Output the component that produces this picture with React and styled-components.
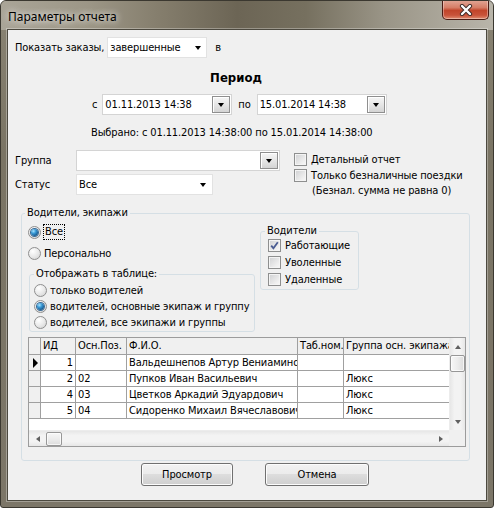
import React from 'react';
import styled, { createGlobalStyle } from 'styled-components';

const UI_FONT = '"DejaVu Sans Condensed", "Liberation Sans", sans-serif';

const GlobalStyle = createGlobalStyle`
  html, body {
    margin: 0;
    padding: 0;
    background: #ffffff;
  }
  body {
    font-family: ${UI_FONT};
    font-size: 11px;
    letter-spacing: -0.12px;
    color: #000;
  }
  * {
    box-sizing: border-box;
  }
`;

const Window = styled.div`
  width: 494px;
  height: 508px;
  display: flex;
  flex-direction: column;
  background: linear-gradient(180deg, #8a8474 0%, #7a7464 30%, #7c7668 100%);
  border: 1px solid #3b3830;
  border-radius: 6px 6px 3px 3px;
  overflow: hidden;
`;

const TitleBar = styled.div`
  height: 29px;
  display: flex;
  justify-content: space-between;
  align-items: flex-start;
  padding-right: 4px;
  background: linear-gradient(90deg, #aaa598 0%, #9c9686 18%, #857e6d 32%, #6c6555 48%, #76705f 62%, #9a9587 78%, #b9b5aa 100%);
`;

const Title = styled.div`
  padding: 8px 0 0 7px;
  font-family: "Noto Sans", "Liberation Sans", sans-serif;
  font-size: 12px;
  letter-spacing: 0;
  line-height: 16px;
  color: #000;
  text-shadow: 0 0 6px rgba(255, 255, 255, 0.9), 0 0 10px rgba(255, 255, 255, 0.6);
`;

const CloseButton = styled.div`
  width: 47px;
  height: 20px;
  margin-top: -1px;
  display: flex;
  align-items: center;
  justify-content: center;
  border: 1px solid #4b1c14;
  border-top: none;
  border-radius: 0 0 5px 5px;
  background: linear-gradient(180deg, #e2a898 0%, #d57d66 40%, #c1452b 55%, #c9533a 80%, #e08e72 100%);
  box-shadow: inset 0 0 0 1px rgba(255, 255, 255, 0.35);
`;

const Client = styled.div`
  flex: 1;
  margin: 0 7px 7px 7px;
  background: #f0f0f0;
  box-shadow: 0 0 0 1px #4c493f, 0 0 0 2px rgba(255, 255, 255, 0.3);
  display: flex;
  flex-direction: column;
`;

const Row = styled.div`
  display: flex;
  align-items: center;
  height: ${p => p.$height || 21}px;
  margin-top: ${p => p.$top || 0}px;
  padding-left: ${p => p.$left || 0}px;
`;

const Text = styled.span`
  margin-left: ${p => p.$gap || 0}px;
  white-space: nowrap;
`;

const PeriodTitle = styled.div`
  margin-top: 12px;
  height: 15px;
  line-height: 15px;
  text-align: center;
  padding-right: 22px;
  font-size: 13px;
  font-weight: bold;
  letter-spacing: 0;
`;

const Combo = styled.div`
  width: ${p => p.$width}px;
  height: 21px;
  margin-left: ${p => p.$gap || 0}px;
  display: flex;
  align-items: center;
  background: #ffffff;
  border: 1px solid ${p => (p.$boxed ? '#d4d4d4' : '#e2e2e2')};
  padding-left: 2px;
  flex-shrink: 0;
`;

const ComboText = styled.span`
  flex: 1;
  white-space: nowrap;
  overflow: hidden;
`;

const Arrow = styled.span`
  width: 0;
  height: 0;
  border-left: 3.5px solid transparent;
  border-right: 3.5px solid transparent;
  border-top: 4px solid #000;
  margin-right: ${p => p.$right || 0}px;
`;

const DropButton = styled.span`
  width: 18px;
  height: 17px;
  margin-right: 1px;
  display: flex;
  align-items: center;
  justify-content: center;
  border: 1px solid #8f8f8f;
  background: linear-gradient(180deg, #f6f6f6 0%, #e6e6e6 50%, #d4d4d4 100%);
  box-shadow: inset 1px 1px 0 #ffffff;
`;

const FormArea = styled.div`
  display: flex;
  margin-top: 11px;
  padding-left: 7px;
`;

const FieldColumn = styled.div`
  width: 279px;
  display: flex;
  flex-direction: column;
  gap: 3px;
`;

const FieldRow = styled.div`
  display: flex;
  align-items: center;
  height: 21px;
`;

const FieldLabel = styled.span`
  width: 61px;
`;

const OptionColumn = styled.div`
  display: flex;
  flex-direction: column;
  gap: ${p => p.$gap || 3}px;
  margin-top: ${p => p.$top || 0}px;
`;

const CheckRow = styled.label`
  display: flex;
  align-items: center;
  height: 13px;
  white-space: nowrap;
`;

const Box = styled.span`
  width: 13px;
  height: 13px;
  margin-right: 4px;
  flex-shrink: 0;
  display: flex;
  align-items: center;
  justify-content: center;
  border: 1px solid #8e8f8f;
  background: linear-gradient(135deg, #cfd0d2 0%, #eeeeee 70%, #f8f8f8 100%);
  box-shadow: inset 0 0 0 1px #f4f4f4;
`;

const Note = styled.div`
  padding-left: 18px;
  margin-top: -1px;
  line-height: 13px;
  white-space: nowrap;
`;

const GroupBox = styled.fieldset`
  margin: ${p => p.$margin || '0'};
  padding: ${p => p.$padding};
  width: ${p => p.$width}px;
  min-width: 0;
  border: 1px solid #d5dfe5;
  border-radius: 3px;
`;

const Caption = styled.legend`
  margin-left: ${p => p.$offset || 0}px;
  padding: 0 2px 2px 2px;
  line-height: 13px;
  white-space: nowrap;
`;

const DriversTop = styled.div`
  display: flex;
  gap: 5px;
  align-items: flex-start;
`;

const LeftPane = styled.div`
  width: 227px;
  display: flex;
  flex-direction: column;
`;

const RadioRow = styled.label`
  display: flex;
  align-items: center;
  height: 16px;
  margin-top: ${p => p.$top || 0}px;
  white-space: nowrap;
`;

const Radio = styled.span`
  width: 13px;
  height: 13px;
  margin-right: 3px;
  flex-shrink: 0;
  border-radius: 50%;
  border: 1px solid #8f8f8f;
  background: radial-gradient(circle at 35% 30%, #ffffff 0%, #eaeaea 50%, #cfcfcf 100%);
  display: flex;
  align-items: center;
  justify-content: center;

  &::after {
    content: '';
    display: ${p => (p.$checked ? 'block' : 'none')};
    width: 7px;
    height: 7px;
    border-radius: 50%;
    background: radial-gradient(circle at 35% 30%, #a8e4ff 0%, #3a9ad6 35%, #15588e 75%, #0d3d66 100%);
    box-shadow: 0 0 0 1px #3a6a94;
  }
`;

const Focus = styled.span`
  outline: 1px dotted #000;
  outline-offset: 0;
  padding: 0 1px;
  line-height: 14px;
`;

const Grid = styled.div`
  margin-top: 5px;
  width: 438px;
  height: 110px;
  border: 1px solid #9c9c9c;
  display: flex;
  flex-direction: column;
  background: #ffffff;
`;

const GridMain = styled.div`
  display: flex;
  height: 92px;
`;

const TableArea = styled.div`
  width: 420px;
  overflow: hidden;
  background: #ffffff;
`;

const GridRow = styled.div`
  display: grid;
  grid-template-columns: 12px 35px 51px 171px 46px 112px;
  height: ${p => (p.$header ? 17 : 16)}px;
`;

const Cell = styled.div`
  border-right: 1px solid #a0a0a0;
  border-bottom: 1px solid #a0a0a0;
  background: ${p => (p.$fixed ? '#f0f0f0' : '#ffffff')};
  padding: 0 2px;
  line-height: ${p => (p.$header ? 16 : 15)}px;
  text-align: ${p => (p.$right ? 'right' : 'left')};
  white-space: nowrap;
  overflow: hidden;
  display: ${p => (p.$center ? 'flex' : 'block')};
  align-items: center;
  justify-content: center;
`;

const Indicator = styled.span`
  width: 0;
  height: 0;
  border-top: 5px solid transparent;
  border-bottom: 5px solid transparent;
  border-left: 5px solid #000;
  margin-left: 1px;
`;

const VScroll = styled.div`
  width: 16px;
  display: flex;
  flex-direction: column;
  align-items: center;
  background: linear-gradient(90deg, #e7e7e7 0%, #f3f3f3 30%, #f3f3f3 70%, #e7e7e7 100%);
  border-left: 1px solid #ececec;
`;

const ScrollArrow = styled.div`
  width: ${p => (p.$horizontal ? 17 : 15)}px;
  height: ${p => (p.$horizontal ? 15 : 17)}px;
  display: flex;
  align-items: center;
  justify-content: center;
  flex-shrink: 0;
`;

const ArrowGlyph = styled.span`
  width: 0;
  height: 0;
  ${p => p.$dir === 'up' && 'border-left: 3.5px solid transparent; border-right: 3.5px solid transparent; border-bottom: 4px solid #606060;'}
  ${p => p.$dir === 'down' && 'border-left: 3.5px solid transparent; border-right: 3.5px solid transparent; border-top: 4px solid #606060;'}
  ${p => p.$dir === 'left' && 'border-top: 3.5px solid transparent; border-bottom: 3.5px solid transparent; border-right: 4px solid #606060;'}
  ${p => p.$dir === 'right' && 'border-top: 3.5px solid transparent; border-bottom: 3.5px solid transparent; border-left: 4px solid #606060;'}
`;

const Thumb = styled.div`
  width: ${p => (p.$horizontal ? 16 : 15)}px;
  height: ${p => (p.$horizontal ? 14 : 17)}px;
  border: 1px solid #979797;
  border-radius: 2px;
  background: ${p =>
    p.$horizontal
      ? 'linear-gradient(180deg, #f7f7f7 0%, #ececec 50%, #dcdcdc 100%)'
      : 'linear-gradient(90deg, #f7f7f7 0%, #ececec 50%, #dcdcdc 100%)'};
  box-shadow: inset 0 0 0 1px rgba(255, 255, 255, 0.7);
`;

const Spacer = styled.div`
  flex: 1;
`;

const HScrollRow = styled.div`
  display: flex;
  height: 16px;
`;

const HScroll = styled.div`
  width: 420px;
  display: flex;
  align-items: center;
  background: linear-gradient(180deg, #e7e7e7 0%, #f3f3f3 30%, #f3f3f3 70%, #e7e7e7 100%);
  border-top: 1px solid #ececec;
`;

const Corner = styled.div`
  flex: 1;
  background: #f0f0f0;
`;

const ButtonRow = styled.div`
  display: flex;
  gap: 32px;
  margin-top: 2px;
  padding-left: 133px;
`;

const Button = styled.div`
  width: ${p => p.$width}px;
  height: 23px;
  display: flex;
  align-items: center;
  justify-content: center;
  border: 1px solid #707070;
  border-radius: 3px;
  background: linear-gradient(180deg, #f2f2f2 0%, #ebebeb 49%, #dddddd 50%, #cfcfcf 100%);
  box-shadow: inset 0 0 0 1px #fcfcfc;
`;

const drivers = [
  { id: '1', pos: '', name: 'Вальдешнепов Артур Вениаминович', tab: '', group: '', current: true },
  { id: '2', pos: '02', name: 'Пупков Иван Васильевич', tab: '', group: 'Люкс' },
  { id: '4', pos: '03', name: 'Цветков Аркадий Эдуардович', tab: '', group: 'Люкс' },
  { id: '5', pos: '04', name: 'Сидоренко Михаил Вячеславович', tab: '', group: 'Люкс' },
];

const Check = ({ checked }) => (
  <Box>
    {checked && (
      <svg width="9" height="9" viewBox="0 0 9 9">
        <path d="M1.2 4.6 L3.4 7.2 L7.8 1.2" fill="none" stroke="#4a5c92" strokeWidth="1.8" />
      </svg>
    )}
  </Box>
);

const App = () => {
  return (
    <>
      <GlobalStyle />
      <Window>
        <TitleBar>
          <Title>Параметры отчета</Title>
          <CloseButton>
            <svg width="14" height="12" viewBox="0 0 14 12">
              <path d="M3 2 L11 10 M11 2 L3 10" stroke="#3d2a26" strokeWidth="4.2" strokeLinecap="round" />
              <path d="M3 2 L11 10 M11 2 L3 10" stroke="#ffffff" strokeWidth="2.4" strokeLinecap="round" />
            </svg>
          </CloseButton>
        </TitleBar>

        <Client>
          <Row $top={7} $left={7}>
            <Text>Показать заказы,</Text>
            <Combo $width={100} $gap={3}>
              <ComboText>завершенные</ComboText>
              <Arrow $right={5} />
            </Combo>
            <Text $gap={8}>в</Text>
          </Row>

          <PeriodTitle>Период</PeriodTitle>

          <Row $top={9} $left={84}>
            <Text>с</Text>
            <Combo $width={130} $gap={5} $boxed>
              <ComboText>01.11.2013 14:38</ComboText>
              <DropButton>
                <Arrow />
              </DropButton>
            </Combo>
            <Text $gap={6}>по</Text>
            <Combo $width={130} $gap={6} $boxed>
              <ComboText>15.01.2014 14:38</ComboText>
              <DropButton>
                <Arrow />
              </DropButton>
            </Combo>
          </Row>

          <Row $top={11} $left={83} $height={13}>
            <Text>Выбрано: с 01.11.2013 14:38:00 по 15.01.2014 14:38:00</Text>
          </Row>

          <FormArea>
            <FieldColumn>
              <FieldRow>
                <FieldLabel>Группа</FieldLabel>
                <Combo $width={204} $boxed>
                  <ComboText />
                  <DropButton>
                    <Arrow />
                  </DropButton>
                </Combo>
              </FieldRow>
              <FieldRow>
                <FieldLabel>Статус</FieldLabel>
                <Combo $width={137}>
                  <ComboText>Все</ComboText>
                  <Arrow $right={6} />
                </Combo>
              </FieldRow>
            </FieldColumn>
            <OptionColumn $top={3}>
              <CheckRow>
                <Check />
                Детальный отчет
              </CheckRow>
              <CheckRow>
                <Check />
                Только безналичные поездки
              </CheckRow>
              <Note>(Безнал. сумма не равна 0)</Note>
            </OptionColumn>
          </FormArea>

          <GroupBox $margin="9px 0 0 13px" $padding="3px 3px 13px 6px" $width={449}>
            <Caption $offset={-3}>Водители, экипажи</Caption>
            <DriversTop>
              <LeftPane>
                <RadioRow>
                  <Radio $checked />
                  <Focus>Все</Focus>
                </RadioRow>
                <RadioRow $top={5}>
                  <Radio />
                  Персонально
                </RadioRow>
                <GroupBox $margin="6px 0 0 1px" $padding="0 4px 1px 4px" $width={226}>
                  <Caption>Отображать в таблице:</Caption>
                  <RadioRow>
                    <Radio />
                    только водителей
                  </RadioRow>
                  <RadioRow>
                    <Radio $checked />
                    водителей, основные экипаж и группу
                  </RadioRow>
                  <RadioRow>
                    <Radio />
                    водителей, все экипажи и группы
                  </RadioRow>
                </GroupBox>
              </LeftPane>
              <GroupBox $padding="0 4px 3px 7px" $width={99}>
                <Caption $offset={-3}>Водители</Caption>
                <OptionColumn $gap={4}>
                  <CheckRow>
                    <Check checked />
                    Работающие
                  </CheckRow>
                  <CheckRow>
                    <Check />
                    Уволенные
                  </CheckRow>
                  <CheckRow>
                    <Check />
                    Удаленные
                  </CheckRow>
                </OptionColumn>
              </GroupBox>
            </DriversTop>

            <Grid>
              <GridMain>
                <TableArea>
                  <GridRow $header>
                    <Cell $fixed $header />
                    <Cell $fixed $header>ИД</Cell>
                    <Cell $fixed $header>Осн.Поз.</Cell>
                    <Cell $fixed $header>Ф.И.О.</Cell>
                    <Cell $fixed $header>Таб.ном.</Cell>
                    <Cell $fixed $header>Группа осн. экипажа</Cell>
                  </GridRow>
                  {drivers.map(d => (
                    <GridRow key={d.id}>
                      <Cell $fixed $center>{d.current && <Indicator />}</Cell>
                      <Cell $right>{d.id}</Cell>
                      <Cell>{d.pos}</Cell>
                      <Cell>{d.name}</Cell>
                      <Cell>{d.tab}</Cell>
                      <Cell>{d.group}</Cell>
                    </GridRow>
                  ))}
                </TableArea>
                <VScroll>
                  <ScrollArrow>
                    <ArrowGlyph $dir="up" />
                  </ScrollArrow>
                  <Thumb />
                  <Spacer />
                  <ScrollArrow>
                    <ArrowGlyph $dir="down" />
                  </ScrollArrow>
                </VScroll>
              </GridMain>
              <HScrollRow>
                <HScroll>
                  <ScrollArrow $horizontal>
                    <ArrowGlyph $dir="left" />
                  </ScrollArrow>
                  <Thumb $horizontal />
                  <Spacer />
                  <ScrollArrow $horizontal>
                    <ArrowGlyph $dir="right" />
                  </ScrollArrow>
                </HScroll>
                <Corner />
              </HScrollRow>
            </Grid>
          </GroupBox>

          <ButtonRow>
            <Button $width={92}>Просмотр</Button>
            <Button $width={104}>Отмена</Button>
          </ButtonRow>
        </Client>
      </Window>
    </>
  );
};

export default App;
